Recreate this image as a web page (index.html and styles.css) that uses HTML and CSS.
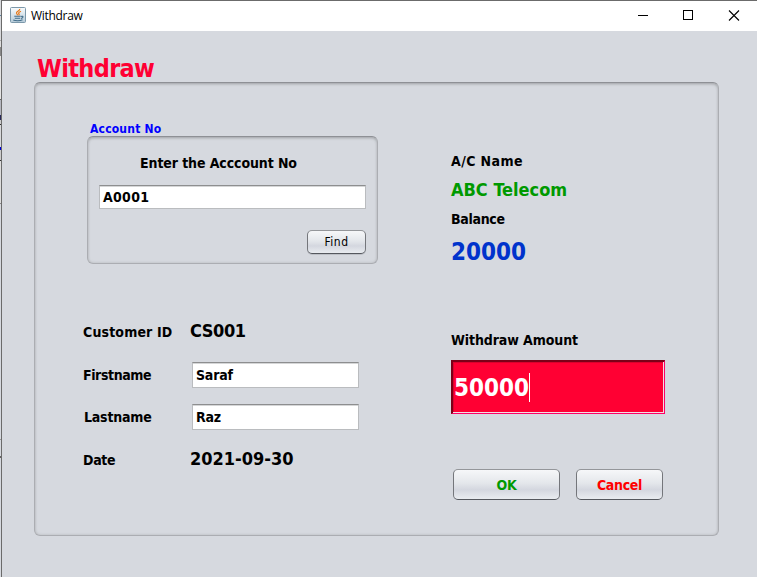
FILE: index.html
```html
<!DOCTYPE html>
<html lang="en">
<head>
<meta charset="utf-8">
<title>Withdraw</title>
<link rel="stylesheet" href="styles.css">
</head>
<body>
<div class="desktop-edge"></div>
<div class="window">
  <header class="titlebar">
    <svg class="app-icon" width="16" height="16" viewBox="0 0 16 16">
      <defs><linearGradient id="tile" x1="0" y1="0" x2="0" y2="1"><stop offset="0" stop-color="#fafcfd"/><stop offset="1" stop-color="#b4cad8"/></linearGradient></defs>
      <rect x=".5" y=".5" width="15" height="15" rx="1" fill="url(#tile)" stroke="#7c98aa"/>
      <path d="M9.8 1.8C10.1 4 5.8 4.6 6.5 6.2L7.8 8.3M11 4.3C8 5.5 8.3 6.3 9.2 7.2L8.8 8.4" fill="none" stroke="#e87817" stroke-width="1.2"/>
      <path d="M4.3 9.3H10.7M4.8 11.2H10.2M11 9.5C13.8 8.6 13.5 11.1 11 11.5M3.3 13C5.5 14 10 14 12.5 12.8" fill="none" stroke="#426d8a" stroke-width="1.1"/>
    </svg>
    <span class="caption">Withdraw</span>
    <svg class="controls" width="103" height="12" viewBox="0 0 103 12">
      <path d="M0 5.5H10M45.5 .5H54.5V9.5H45.5Z" fill="none" stroke="#000" shape-rendering="crispEdges"/>
      <path d="M91 .5L101 10.5M101 .5L91 10.5" fill="none" stroke="#000" stroke-width="1.1"/>
    </svg>
  </header>
  <main class="content">
    <h1 class="heading">Withdraw</h1>
    <div class="panel main-panel">
      <section class="customer">
        <div class="legend">Account No</div>
        <div class="panel lookup">
          <label class="label lookup-label">Enter the Acccount No</label>
          <div class="field">A0001</div>
          <button class="button find">Find</button>
        </div>
        <div class="details">
          <span class="label customer-label">Customer ID</span><span class="value cid">CS001</span>
          <span class="label first">Firstname</span><div class="field">Saraf</div>
          <span class="label last">Lastname</span><div class="field">Raz</div>
          <span class="label date-label">Date</span><span class="value date">2021-09-30</span>
        </div>
      </section>
      <section class="account">
        <div class="label ac">A/C Name</div>
        <div class="value name">ABC Telecom</div>
        <div class="label bal">Balance</div>
        <div class="balance">20000</div>
        <div class="label amount-label">Withdraw Amount</div>
        <div class="amount"><span class="amount-text">50000</span><i class="caret"></i></div>
        <div class="actions">
          <button class="button ok">OK</button>
          <button class="button cancel">Cancel</button>
        </div>
      </section>
    </div>
  </main>
</div>
</body>
</html>
```
FILE: styles.css
```css
* { box-sizing: border-box; }
body {
  margin: 0;
  width: 757px;
  height: 577px;
  overflow: hidden;
  display: flex;
  background: #d6d9df;
  font-family: "DejaVu Sans Condensed", "DejaVu Sans", sans-serif;
  font-weight: bold;
  color: #000;
  white-space: nowrap;
}
.desktop-edge {
  width: 1px;
  background: linear-gradient(#d8d9dc 0 15px, #5d83a0 15px 16px, #d8d9dc 16px 40px, #aaa 40px 41px, #ddd 41px 47px, #888 47px 56px, #e4e4e4 56px 99px, #666 99px 100px, #b5b7c0 100px 115px, #28285a 115px 120px, #ccc 120px 124px, #333 124px 125px, #d8d9dc 125px 147px, #0000d8 147px 150px, #ccc 150px 160px, #333 160px 161px, #ddd 161px 203px, #888 203px 204px, #d6d9df 204px 439px, #999 439px 440px, #d6d9df 440px 456px, #666 456px 458px, #d6d9df 458px);
}
.window { flex: 1; border: 1px solid #6b6b6b; border-width: 1px 0 0 1px; }
.titlebar { display: flex; align-items: center; height: 30px; padding: 0 16px 0 8px; background: #fff; }
.app-icon { margin-top: -2px; }
.caption { margin: -1px auto 0 5px; font: 12px/16px "Open Sans", "Noto Sans", sans-serif; letter-spacing: -.3px; }
.content { padding: 23px 0 0 32px; }
.heading { margin: 0; padding-left: 3px; height: 28px; font-size: 25px; line-height: 29px; color: #ff0033; letter-spacing: -.65px; }
.panel {
  border: 1px solid #abadb2;
  border-top-color: #8e9095;
  border-radius: 6px;
  box-shadow: inset 0 2px 3px -1px #a4a6aa, inset 0 0 3px #b5b7bb;
}
.main-panel { width: 685px; height: 454px; display: flex; padding: 36px 0 0 48px; }
.customer { width: 368px; }
.legend { height: 17px; padding-left: 7px; font-size: 12px; line-height: 20px; color: #0000ff; letter-spacing: .2px; }
.lookup { width: 291px; height: 128px; margin-left: 4px; padding: 17px 11px 0; display: flex; flex-direction: column; }
.label { font-size: 14px; line-height: 18px; letter-spacing: -.3px; }
.lookup-label { height: 31px; padding-left: 41px; letter-spacing: -.1px; }
.field {
  display: flex;
  align-items: center;
  padding-left: 3px;
  background: #fff;
  border: 1px solid #babcbf;
  border-top-color: #8d8e8f;
  box-shadow: inset 0 1px 0 #d5d6d7;
  font-size: 14px;
  letter-spacing: -.2px;
}
.lookup .field { height: 24px; letter-spacing: .3px; }
.button {
  padding: 0;
  border: 1px solid #72757a;
  border-color: #94969a #74767b #55585e;
  border-radius: 5px;
  background: linear-gradient(#f6f7f9, #e4e7eb 45%, #d4d7df 68%, #e9ecf0);
  box-shadow: 0 1px 0 #bdc0c6;
  font-family: inherit;
  font-weight: bold;
  font-size: 14px;
  letter-spacing: -.3px;
}
.find { width: 59px; height: 24px; margin: 21px 0 0; align-self: flex-end; font-weight: normal; font-size: 12px; letter-spacing: .5px; }
.details { display: grid; grid-template: 42px 42px 42px 42px / 109px 167px; margin-top: 57px; }
.details .label { line-height: 22px; }
.details .field { height: 26px; margin-top: -1px; }
.value { font-size: 18px; line-height: 20px; letter-spacing: 0; }
.details .value { margin-left: -2px; }
.details .cid { letter-spacing: -.4px; }
.customer-label { letter-spacing: .15px; }
.first, .last { padding-top: 1px; }
.first { letter-spacing: -.4px; }
.last { padding-left: 1px; letter-spacing: -.2px; }
.date-label, .date { padding-top: 2px; }
.account { width: 214px; padding-top: 33px; }
.ac { height: 28px; letter-spacing: .4px; }
.name { height: 30px; color: #009900; }
.bal { height: 26px; }
.balance { height: 95px; font-size: 24px; line-height: 33px; color: #0033cc; }
.amount-label { height: 29px; letter-spacing: -.1px; }
.amount {
  height: 54px;
  display: flex;
  align-items: center;
  padding: 1px 0 0 1px;
  background: #ff0033;
  border: 2px solid;
  border-color: #7c0018 #ff0066 #ff0066 #7c0018;
  border-width: 2px 1px 1px 2px;
  box-shadow: inset -1px -1px 0 #f2dde3, inset 1px 1px 0 #dc002c;
  color: #fff;
  font-size: 24px;
}
.caret { width: 1px; height: 29px; margin-top: -2px; background: #fff; }
.actions { display: flex; gap: 16px; padding: 55px 0 0 2px; }
.ok, .cancel { height: 31px; padding-top: 1px; box-shadow: none; }
.ok { width: 107px; color: #009900; }
.cancel { width: 87px; color: #ff0000; }
```
